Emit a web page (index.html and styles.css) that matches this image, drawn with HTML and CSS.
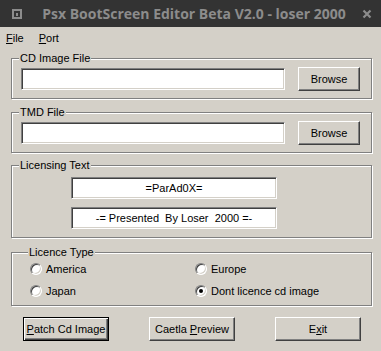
FILE: index.html
```html
<!DOCTYPE html>
<html lang="en">
<head>
    <meta charset="UTF-8">
    <title>Psx BootScreen Editor Beta V2.0 - loser 2000</title>
    <link rel="stylesheet" href="styles.css">
</head>
<body>
    <div class="window">
        <div class="titlebar">
            <svg class="sys-icon" width="10" height="10" viewBox="0 0 10 10">
                <path d="M1 1 H9 V9 H1 Z" fill="none" stroke="#8c8c8c" stroke-width="2"/>
                <rect x="4" y="4" width="2" height="3" fill="#8c8c8c"/>
            </svg>
            <span class="title">Psx BootScreen Editor Beta V2.0 - loser 2000</span>
            <svg class="close-icon" width="10" height="10" viewBox="0 0 10 10">
                <path d="M1.5 1.5 L8.5 8.5 M8.5 1.5 L1.5 8.5" stroke="#8c8c8c" stroke-width="2.2"/>
            </svg>
        </div>

        <div class="menubar">
            <span class="menu"><u>F</u>ile</span>
            <span class="menu"><u>P</u>ort</span>
        </div>

        <div class="client">
            <fieldset class="group group-cd">
                <legend>CD Image File</legend>
                <div class="file-row">
                    <input class="field" type="text">
                    <button class="btn btn-browse">Browse</button>
                </div>
            </fieldset>

            <fieldset class="group group-tmd">
                <legend>TMD File</legend>
                <div class="file-row">
                    <input class="field" type="text">
                    <button class="btn btn-browse">Browse</button>
                </div>
            </fieldset>

            <fieldset class="group group-text">
                <legend>Licensing Text</legend>
                <div class="text-lines">
                    <input class="field field-center" type="text" value="=ParAd0X=">
                    <input class="field field-center" type="text" value="-= Presented  By Loser  2000 =-">
                </div>
            </fieldset>

            <fieldset class="group group-licence">
                <legend>Licence Type</legend>
                <div class="radio-grid">
                    <label class="radio-item"><span class="radio"></span>America</label>
                    <label class="radio-item"><span class="radio"></span>Europe</label>
                    <label class="radio-item"><span class="radio"></span>Japan</label>
                    <label class="radio-item"><span class="radio checked"></span>Dont licence cd image</label>
                </div>
            </fieldset>

            <div class="actions">
                <button class="btn btn-action btn-default"><u>P</u>atch Cd Image</button>
                <button class="btn btn-action">Caetla <u>P</u>review</button>
                <button class="btn btn-action">E<u>x</u>it</button>
            </div>
        </div>
    </div>
</body>
</html>
```

FILE: styles.css
```css
body {
    margin: 0;
    background-color: #d4d0c8;
    font-family: 'Liberation Sans', Arial, sans-serif;
    font-size: 11px;
    color: #000;
}

.window {
    width: 381px;
    height: 351px;
    background-color: #d4d0c8;
}

.titlebar {
    height: 27px;
    background-color: #333333;
    display: flex;
    align-items: center;
    padding: 0 9px 0 12px;
}

.sys-icon {
    flex: none;
}

.title {
    flex: 1;
    min-width: 0;
    white-space: nowrap;
    text-align: center;
    padding-left: 4px;
    font-family: 'Open Sans', sans-serif;
    font-weight: 700;
    font-size: 14px;
    color: #8c8c8c;
}

.close-icon {
    flex: none;
}

.menubar {
    height: 21px;
    display: flex;
    align-items: center;
    gap: 15px;
    padding-left: 6px;
}

.client {
    padding: 0 9px 0 11px;
}

.group {
    margin: 0;
    padding: 2px 11px 7px 9px;
    border: 1px solid #808080;
    box-shadow: inset 1px 1px 0 #fff, 1px 1px 0 #fff;
    min-width: 0;
}

.group legend {
    margin-left: -2px;
    padding: 0 1px;
    line-height: 13px;
    background-color: #d4d0c8;
}

.group-cd {
    margin-top: 4px;
}

.group-tmd {
    margin-top: 7px;
}

.group-text {
    margin-top: 6px;
    padding-top: 5px;
    padding-bottom: 8px;
}

.group-licence {
    margin-top: 8px;
    padding: 2px 10px 6px 18px;
}

.file-row {
    display: flex;
    align-items: center;
    gap: 13px;
}

.field {
    box-sizing: border-box;
    height: 22px;
    margin: 0;
    padding: 0 3px;
    font: inherit;
    color: #000;
    background-color: #fff;
    border: 1px solid;
    border-color: #808080 #fff #fff #808080;
    box-shadow: inset 1px 1px 0 #404040, inset -1px -1px 0 #d4d0c8;
    outline: none;
}

.file-row .field {
    flex: 1;
    min-width: 0;
}

.text-lines {
    display: flex;
    flex-direction: column;
    gap: 8px;
    padding-left: 50px;
}

.field-center {
    width: 206px;
    text-align: center;
}

.btn {
    box-sizing: border-box;
    height: 24px;
    margin: 0;
    padding: 0;
    font: inherit;
    color: #000;
    background-color: #d4d0c8;
    border: 1px solid;
    border-color: #fff #404040 #404040 #fff;
    box-shadow: inset -1px -1px 0 #808080, inset 1px 1px 0 #d4d0c8;
}

.btn-browse {
    flex: none;
    width: 62px;
}

.radio-grid {
    display: grid;
    grid-template-columns: 165px 1fr;
    row-gap: 6px;
}

.radio-item {
    display: flex;
    align-items: center;
    gap: 4px;
    height: 16px;
}

.radio {
    box-sizing: border-box;
    width: 12px;
    height: 12px;
    border-radius: 50%;
    background-color: #fff;
    border: 1px solid;
    border-color: #808080 #fff #fff #808080;
    box-shadow: inset 1px 1px 0 #404040, inset -1px -1px 0 #d4d0c8;
    display: flex;
    align-items: center;
    justify-content: center;
}

.radio.checked::after {
    content: '';
    width: 4px;
    height: 4px;
    border-radius: 50%;
    background-color: #000;
}

.actions {
    display: flex;
    gap: 40px;
    margin-top: 11px;
    padding-left: 12px;
}

.btn-action {
    width: 86px;
}

.btn-default {
    border-color: #000;
    box-shadow: inset 1px 1px 0 #fff, inset -1px -1px 0 #404040, inset -2px -2px 0 #808080;
}
```
